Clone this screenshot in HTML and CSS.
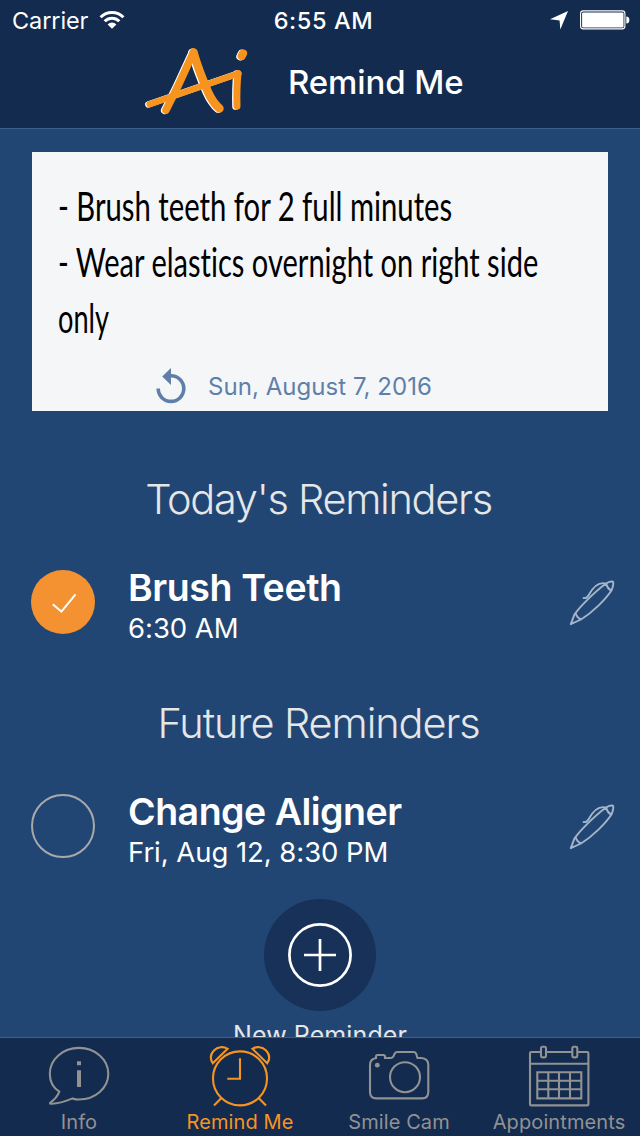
FILE: index.html
```
<!DOCTYPE html>
<html lang="en">
<head>
    <meta charset="UTF-8">
    <meta name="viewport" content="width=device-width, initial-scale=1.0">
    <title>Remind Me</title>
    <link rel="stylesheet" href="styles.css">
</head>
<body>
    <header>
        <div class="status-bar">
            <div class="status-left">
                <span class="carrier">Carrier</span>
                <svg class="wifi" width="26" height="20" viewBox="0 0 26 20">
                    <path d="M1.6 7.2a16.2 16.2 0 0 1 22.8 0M5.7 11.3a10.4 10.4 0 0 1 14.6 0" fill="none" stroke="#fff" stroke-width="3"/>
                    <path d="M8.6 14.4a6.2 6.2 0 0 1 8.8 0L13 18.8z" fill="#fff"/>
                </svg>
            </div>
            <span class="clock">6:55 AM</span>
            <div class="status-right">
                <svg width="20" height="20" viewBox="0 0 20 20"><path d="M19 1L11.3 19.4 10.6 10.4 1 9.3z" fill="#fff"/></svg>
                <svg width="50" height="20" viewBox="0 0 50 20">
                    <rect x="0.6" y="0.9" width="44.3" height="18" rx="2.6" fill="none" stroke="#fff" stroke-width="1.1"/>
                    <rect x="2.1" y="2.4" width="41.4" height="15" rx="1.2" fill="#fff"/>
                    <path d="M46.3 6.5a3 3.4 0 0 1 0 7z" fill="#fff"/>
                </svg>
            </div>
        </div>
        <div class="title-bar">
            <svg class="logo" width="115" height="80" viewBox="0 0 115 80">
                <defs>
                    <g id="mark" fill="none" stroke-linecap="round" stroke-linejoin="round">
                        <path stroke-width="7.6" d="M53.5 12.3C47 26 42 38 36 50L26 70"/>
                        <path stroke-width="8.4" d="M53.5 12.5C57 25 62 38 68 52Q73 63 79.5 68.5"/>
                        <path stroke-width="6.2" d="M9.5 64.2L98.5 33.5"/>
                        <path stroke-width="7" d="M98 33.5Q96.5 48 97 66"/>
                        <path stroke-width="8.2" d="M103 13.5L101.7 16"/>
                    </g>
                </defs>
                <use href="#mark" x="-1.3" y="0.3" stroke="#fff"/>
                <use href="#mark" stroke="#f7941f"/>
            </svg>
            <h1>Remind Me</h1>
        </div>
    </header>

    <main>
        <section class="note">
            <p class="note-text">
                <span class="line line-1">- Brush teeth for 2 full minutes</span>
                <span class="line line-2">- Wear elastics overnight on right side</span>
                <span class="line line-3">only</span>
            </p>
            <div class="note-date">
                <svg width="32" height="36" viewBox="0 0 32 36">
                    <path d="M3.2 20.6A12.8 12.8 0 1 0 16 7.8" fill="none" stroke="#5f7fa9" stroke-width="3.6"/>
                    <path d="M16 0v17L7.2 8.6z" fill="#5f7fa9"/>
                </svg>
                <span>Sun, August 7, 2016</span>
            </div>
        </section>

        <h2 class="today">Today's Reminders</h2>
        <div class="reminder">
            <div class="check done">
                <svg width="64" height="64" viewBox="0 0 64 64"><path d="M21.8 34.2L30.4 41.6 44.5 24.3" fill="none" stroke="#fff" stroke-width="2"/></svg>
            </div>
            <div class="details">
                <h3 class="name-brush">Brush Teeth</h3>
                <p>6:30 AM</p>
            </div>
            <svg class="pen" width="48" height="48" viewBox="0 0 48 48">
                <path d="M2.8 45.2L6.3 35.8C11 28.5 26 13.5 37.3 5Q42 1.6 45 2.7 46 5 43.6 11.3C38 20 25 33 13 40.5zM7.8 34.6Q9 39 13 40.4M38 4.6Q39.5 9.5 43.2 11.6M15.6 19C18 19.6 19.3 18.5 20.7 16 25 8 31 2.5 38.5 4.6"/>
            </svg>
        </div>

        <h2 class="future">Future Reminders</h2>
        <div class="reminder">
            <div class="check"></div>
            <div class="details">
                <h3 class="name-aligner">Change Aligner</h3>
                <p>Fri, Aug 12, 8:30 PM</p>
            </div>
            <svg class="pen" width="48" height="48" viewBox="0 0 48 48">
                <path d="M2.8 45.2L6.3 35.8C11 28.5 26 13.5 37.3 5Q42 1.6 45 2.7 46 5 43.6 11.3C38 20 25 33 13 40.5zM7.8 34.6Q9 39 13 40.4M38 4.6Q39.5 9.5 43.2 11.6M15.6 19C18 19.6 19.3 18.5 20.7 16 25 8 31 2.5 38.5 4.6"/>
            </svg>
        </div>

        <div class="new-reminder">
            <div class="add">
                <svg width="64" height="64" viewBox="0 0 64 64" fill="none" stroke="#fff">
                    <circle cx="32" cy="32" r="30.6" stroke-width="2.7"/>
                    <path d="M32 16v32M16 32h32" stroke-width="2.7"/>
                </svg>
            </div>
            <span>New Reminder</span>
        </div>
    </main>

    <nav>
        <a class="tab">
            <svg width="64" height="64" viewBox="0 0 64 64">
                <path d="M12.3 47.7C6 43.5 2.8 37 2.8 29.7 2.8 15.4 15.8 3.9 32 3.9S61.3 15.4 61.3 29.7 48.2 55.5 32 55.5Q28.5 55.5 25.7 54.4C18 57.5 11 60.3 3.5 59.6 2.8 59.5 2.8 58.9 3.4 58.5 7.5 55.8 10.5 52.5 12.3 47.7z"/>
                <path class="solid" d="M30 17.3h4v4h-4zM30 26.3h4v16.8h-4z"/>
            </svg>
            <span>Info</span>
        </a>
        <a class="tab active">
            <svg width="64" height="64" viewBox="0 0 64 64">
                <circle cx="32" cy="34.4" r="27"/>
                <path d="M32 14.3v20.4H19.3M13.7 53.7L6 61.6M50.3 53.7L58 61.6"/>
                <path d="M4.8 19.3L19.6 4.8C15 2 9.5 3 6.2 6.3 2.5 10 2 15 4.8 19.3zM59.2 19.3L44.4 4.8C49 2 54.5 3 57.8 6.3 61.5 10 62 15 59.2 19.3z"/>
            </svg>
            <span>Remind Me</span>
        </a>
        <a class="tab">
            <svg width="64" height="64" viewBox="0 0 64 64">
                <path d="M9 14V12.5Q9 11 10.5 11H16.5Q18 11 18 12.5V14H24Q25.8 14 26.5 12.2L27.6 9.8Q28.4 8 30.4 8H46.5Q48.5 8 49.2 9.8L50.5 14H54.3Q61.3 14.5 61.3 21V48Q61.3 54.4 55 54.4H9.3Q3 54.4 3 48V21Q3 15 9 14z"/>
                <circle cx="38" cy="33.2" r="15"/>
                <circle class="solid" cx="10.3" cy="21.2" r="2.4"/>
            </svg>
            <span>Smile Cam</span>
        </a>
        <a class="tab">
            <svg width="64" height="64" viewBox="0 0 64 64">
                <path d="M14 8H4.2Q3 8 3 9.2V60.2Q3 61.4 4.2 61.4H60.2Q61.4 61.4 61.4 60.2V9.2Q61.4 8 60.2 8H50.3M45.3 8H19M3 19.8H61.4"/>
                <rect x="14" y="2.8" width="5" height="10.6" rx="1.4"/>
                <rect x="45.3" y="2.8" width="5" height="10.6" rx="1.4"/>
                <path d="M10.3 28.2H54.3V54.4H10.3zM21.3 28.2V54.4M32 28.2V54.4M43 28.2V54.4M10.3 36.8H54.3M10.3 45.3H54.3"/>
            </svg>
            <span>Appointments</span>
        </a>
    </nav>
</body>
</html>
```
FILE: styles.css
```
* {
    box-sizing: border-box;
}

body {
    display: flex;
    flex-direction: column;
    width: 640px;
    height: 1136px;
    margin: 0;
    overflow: hidden;
    background-color: #214674;
    color: #ffffff;
    font-family: Inter, "Liberation Sans", sans-serif;
}

h1, h2, h3, p {
    margin: 0;
    white-space: nowrap;
}

svg {
    display: block;
    flex: none;
}

/* Header */
header {
    flex: none;
    height: 129px;
    background-color: #122b4f;
    border-bottom: 1px solid #3c5f8b;
}

.status-bar {
    display: grid;
    grid-template-columns: 1fr auto 1fr;
    align-items: center;
    height: 40px;
    padding: 0 10px 0 12px;
    font-size: 23.5px;
    line-height: 38px;
}

.status-bar span {
    padding-top: 2px;
}

.status-left, .status-right {
    display: flex;
    align-items: center;
}

.status-left {
    gap: 11px;
}

.status-right {
    justify-content: flex-end;
    gap: 11px;
}

.carrier {
    letter-spacing: -0.1px;
}

.clock {
    margin-left: 5px;
    font-weight: 500;
    letter-spacing: 0.6px;
}

.title-bar {
    display: flex;
    gap: 33px;
    height: 88px;
    padding-left: 140px;
}

h1 {
    font-size: 33px;
    font-weight: 500;
    line-height: 84px;
    letter-spacing: -0.1px;
}

/* Content */
main {
    flex: 1;
    min-height: 0;
    overflow: hidden;
    padding-top: 23px;
}

.note {
    height: 259px;
    margin: 0 32px;
    padding: 26px 26px 0;
    background-color: #f5f6f8;
}

.note-text {
    height: 187px;
    color: #000000;
    font-family: Lato, sans-serif;
    font-size: 40px;
    line-height: 56px;
    font-variant-ligatures: none;
}

.line {
    display: block;
    width: max-content;
    transform-origin: left;
}

.line-1 {
    transform: scaleX(0.731);
}

.line-2 {
    transform: scaleX(0.726);
}

.line-3 {
    transform: scaleX(0.68);
}

.note-date {
    display: flex;
    align-items: center;
    gap: 21px;
    padding-left: 97px;
    color: #5f7fa9;
    font-size: 24px;
    line-height: 38px;
    letter-spacing: 0.05px;
}

.note-date span {
    padding-top: 3px;
}

h2 {
    height: 52px;
    padding-right: 3px;
    color: #e6e6e6;
    font-size: 41.5px;
    font-weight: 300;
    line-height: 50px;
    text-align: center;
}

.today {
    margin-top: 63px;
    letter-spacing: -1.3px;
}

.future {
    margin-top: 64px;
    letter-spacing: -1.1px;
}

.reminder {
    display: flex;
    height: 108px;
    padding: 44px 24px 0 31px;
}

.check {
    width: 64px;
    height: 64px;
    border: 2px solid #a9a9a9;
    border-radius: 50%;
}

.check.done {
    border: none;
    background-color: #f49231;
}

.details {
    flex: 1;
    margin-left: 33px;
}

h3 {
    margin-top: -5px;
    font-size: 37.5px;
    font-weight: 600;
    line-height: 46px;
}

.name-brush {
    letter-spacing: -0.4px;
}

.name-aligner {
    letter-spacing: -0.5px;
}

.details p {
    font-size: 27.5px;
    line-height: 34px;
    letter-spacing: -0.05px;
}

.pen {
    margin-top: 9px;
    fill: none;
    stroke: #a5b5c9;
    stroke-width: 1.9;
    stroke-linejoin: round;
    stroke-linecap: round;
}

.new-reminder {
    display: flex;
    flex-direction: column;
    align-items: center;
    margin-top: 41px;
    color: #e6e6e6;
    font-size: 25px;
    line-height: 30px;
    letter-spacing: 0.1px;
    white-space: nowrap;
}

.add {
    display: flex;
    align-items: center;
    justify-content: center;
    width: 112px;
    height: 112px;
    margin-bottom: 9px;
    background-color: #173158;
    border-radius: 50%;
}

/* Tab bar */
nav {
    display: grid;
    grid-template-columns: repeat(4, 160px);
    flex: none;
    height: 99px;
    padding-top: 6px;
    background-color: #122b4f;
    border-top: 1px solid #3c5f8b;
}

.tab {
    display: flex;
    flex-direction: column;
    align-items: center;
    color: #929292;
    font-size: 20px;
    line-height: 28px;
    letter-spacing: 0.1px;
}

.tab svg {
    margin-right: 2px;
    fill: none;
    stroke: currentColor;
    stroke-width: 2.1;
}

.tab span {
    margin-right: 2px;
}

.tab .solid {
    fill: currentColor;
    stroke: none;
}

.tab.active {
    color: #f7941f;
}

.tab.active svg, .tab.active span {
    margin-right: 0;
}
```
